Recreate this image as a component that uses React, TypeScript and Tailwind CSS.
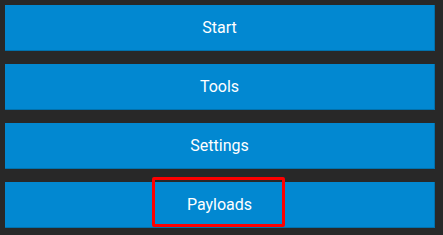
const items = ["Start", "Tools", "Settings", "Payloads"]

export default function App() {
  return (
    <div className="w-[443px] h-[235px] bg-[#282828] px-[5px] pt-[5px] flex flex-col gap-[13px] font-['Roboto',sans-serif]">
      {items.map((label) => (
        <button
          key={label}
          className="relative w-[430px] h-[46px] bg-[#0288d1] border-b border-r border-[#0271ac] text-white text-[16px] flex items-center justify-center"
        >
          {label}
          {label === "Payloads" && (
            <span className="absolute left-[147px] -top-[5px] w-[133px] h-[50px] border-[3px] border-[#ff0000] rounded-[2px]" />
          )}
        </button>
      ))}
    </div>
  )
}
